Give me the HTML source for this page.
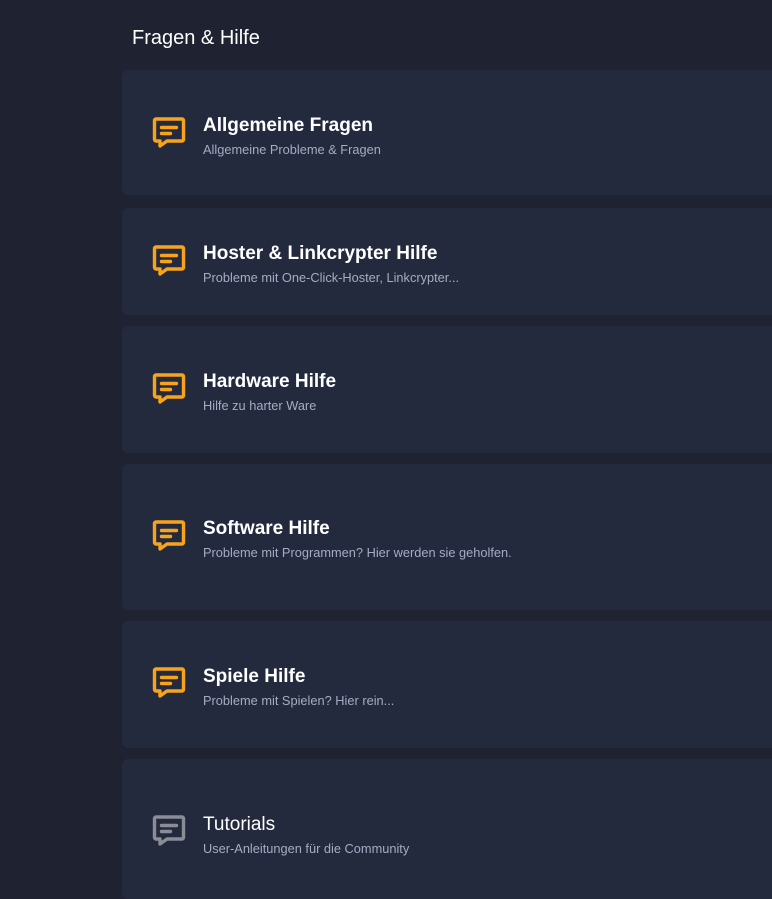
<!DOCTYPE html>
<html><head><meta charset="utf-8"><style>
body{margin:0;width:772px;height:875px;overflow:hidden;background:#1e2231;font-family:"Liberation Sans",sans-serif;position:relative}
h1{position:absolute;left:132px;top:27px;margin:0;font-weight:normal;font-size:20px;color:#fff}
.c{position:absolute;left:122px;width:670px;background:#232a3e;border-radius:6px}
.c svg{position:absolute;left:30px}
.t{position:absolute;left:81px;font-size:19px;font-weight:bold;color:#fff}
.s{position:absolute;left:81px;font-size:12.8px;color:#a4acc4}
</style></head><body>
<h1>Fragen &amp; Hilfe</h1>
<div class="c" style="top:70px;height:125px"><svg style="top:46px" width="36" height="36" viewBox="0 0 36 36" fill="none" stroke="#f7a41c" stroke-width="3.4" stroke-linejoin="round"><path d="M4 3h26a1.5 1.5 0 0 1 1.5 1.5v19a1.5 1.5 0 0 1-1.5 1.5H15l-7 5v-5H4a1.5 1.5 0 0 1-1.5-1.5v-19A1.5 1.5 0 0 1 4 3z"/><path d="M9.5 11.5h15M9.5 17.5h9" stroke-linecap="round"/></svg><div class="t" style="top:45px">Allgemeine Fragen</div><div class="s" style="top:72px">Allgemeine Probleme &amp; Fragen</div></div>
<div class="c" style="top:208px;height:107px"><svg style="top:36px" width="36" height="36" viewBox="0 0 36 36" fill="none" stroke="#f7a41c" stroke-width="3.4" stroke-linejoin="round"><path d="M4 3h26a1.5 1.5 0 0 1 1.5 1.5v19a1.5 1.5 0 0 1-1.5 1.5H15l-7 5v-5H4a1.5 1.5 0 0 1-1.5-1.5v-19A1.5 1.5 0 0 1 4 3z"/><path d="M9.5 11.5h15M9.5 17.5h9" stroke-linecap="round"/></svg><div class="t" style="top:35px">Hoster &amp; Linkcrypter Hilfe</div><div class="s" style="top:62px">Probleme mit One-Click-Hoster, Linkcrypter...</div></div>
<div class="c" style="top:326px;height:127px"><svg style="top:46px" width="36" height="36" viewBox="0 0 36 36" fill="none" stroke="#f7a41c" stroke-width="3.4" stroke-linejoin="round"><path d="M4 3h26a1.5 1.5 0 0 1 1.5 1.5v19a1.5 1.5 0 0 1-1.5 1.5H15l-7 5v-5H4a1.5 1.5 0 0 1-1.5-1.5v-19A1.5 1.5 0 0 1 4 3z"/><path d="M9.5 11.5h15M9.5 17.5h9" stroke-linecap="round"/></svg><div class="t" style="top:45px">Hardware Hilfe</div><div class="s" style="top:72px">Hilfe zu harter Ware</div></div>
<div class="c" style="top:464px;height:146px"><svg style="top:55px" width="36" height="36" viewBox="0 0 36 36" fill="none" stroke="#f7a41c" stroke-width="3.4" stroke-linejoin="round"><path d="M4 3h26a1.5 1.5 0 0 1 1.5 1.5v19a1.5 1.5 0 0 1-1.5 1.5H15l-7 5v-5H4a1.5 1.5 0 0 1-1.5-1.5v-19A1.5 1.5 0 0 1 4 3z"/><path d="M9.5 11.5h15M9.5 17.5h9" stroke-linecap="round"/></svg><div class="t" style="top:54px">Software Hilfe</div><div class="s" style="top:81px">Probleme mit Programmen? Hier werden sie geholfen.</div></div>
<div class="c" style="top:621px;height:127px"><svg style="top:45px" width="36" height="36" viewBox="0 0 36 36" fill="none" stroke="#f7a41c" stroke-width="3.4" stroke-linejoin="round"><path d="M4 3h26a1.5 1.5 0 0 1 1.5 1.5v19a1.5 1.5 0 0 1-1.5 1.5H15l-7 5v-5H4a1.5 1.5 0 0 1-1.5-1.5v-19A1.5 1.5 0 0 1 4 3z"/><path d="M9.5 11.5h15M9.5 17.5h9" stroke-linecap="round"/></svg><div class="t" style="top:45px">Spiele Hilfe</div><div class="s" style="top:72px">Probleme mit Spielen? Hier rein...</div></div>
<div class="c" style="top:759px;height:140px"><svg style="top:55px" width="36" height="36" viewBox="0 0 36 36" fill="none" stroke="#8a8d96" stroke-width="3.4" stroke-linejoin="round"><path d="M4 3h26a1.5 1.5 0 0 1 1.5 1.5v19a1.5 1.5 0 0 1-1.5 1.5H15l-7 5v-5H4a1.5 1.5 0 0 1-1.5-1.5v-19A1.5 1.5 0 0 1 4 3z"/><path d="M9.5 11.5h15M9.5 17.5h9" stroke-linecap="round"/></svg><div class="t" style="top:55px;font-weight:normal">Tutorials</div><div class="s" style="top:82px">User-Anleitungen für die Community</div></div>
</body></html>
